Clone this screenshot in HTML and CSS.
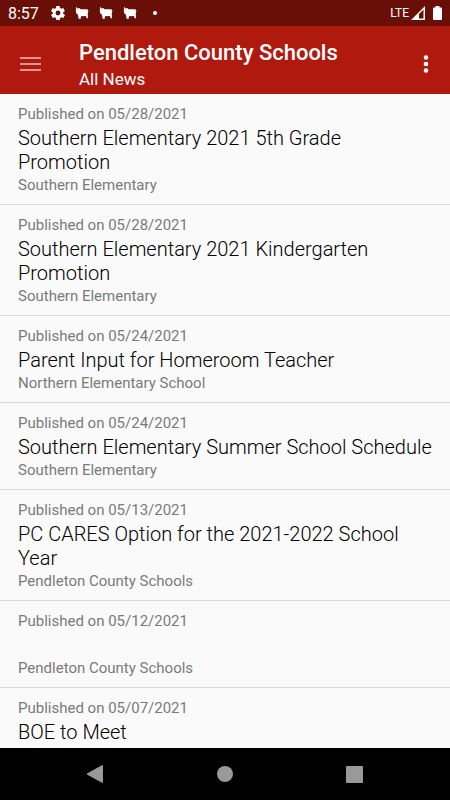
FILE: index.html
```html
<!DOCTYPE html>
<html lang="en">
<head>
    <meta charset="utf-8">
    <meta name="viewport" content="width=device-width, initial-scale=1">
    <title>Pendleton County Schools</title>
    <link rel="stylesheet" href="styles.css">
</head>
<body>
    <div class="status-bar">
        <span class="clock">8:57</span>
        <div class="notifications">
            <svg width="14" height="14" viewBox="2 2 20 20" fill="#fff"><path d="M19.4 13a7.500 7.500 0 0 0 0-2l2.100-1.650a.5.5 0 0 0 .1-.64l-2-3.460a.5.5 0 0 0-.6-.22l-2.500 1a7.300 7.300 0 0 0-1.700-1l-.38-2.650A.5.5 0 0 0 14 2h-4a.5.5 0 0 0-.5.420L9.100 5.070a7.300 7.300 0 0 0-1.700 1l-2.500-1a.5.5 0 0 0-.6.22l-2 3.460a.5.5 0 0 0 .1.640L4.600 11a7.500 7.500 0 0 0 0 2l-2.100 1.650a.5.5 0 0 0-.1.640l2 3.460c.12.220.4.300.6.220l2.500-1a7.300 7.300 0 0 0 1.700 1l.38 2.650c.04.240.25.420.5.420h4c.25 0 .46-.18.5-.42l.38-2.650a7.300 7.300 0 0 0 1.700-1l2.500 1c.22.080.48 0 .6-.22l2-3.460a.5.5 0 0 0-.1-.64zM12 15.500a3.500 3.500 0 1 1 0-7 3.500 3.500 0 0 1 0 7z"/></svg>
            <svg width="14" height="14" viewBox="0 0 14 14" fill="#fff"><path d="M1.200.8l1.400 1.700L4.300 2l1.200 1.300h6.300c1.200 0 1.600.8 1.500 2l-.6 2.200.3 4.700h-1.500l-.5-2.200L6 10.200 5.500 13H3.800L2.800 8.500 1.200 7.200.8 4.500z"/></svg>
            <svg width="14" height="14" viewBox="0 0 14 14" fill="#fff"><path d="M1.200.8l1.400 1.700L4.300 2l1.200 1.300h6.300c1.200 0 1.600.8 1.500 2l-.6 2.200.3 4.700h-1.500l-.5-2.200L6 10.200 5.500 13H3.800L2.800 8.500 1.200 7.200.8 4.500z"/></svg>
            <svg width="14" height="14" viewBox="0 0 14 14" fill="#fff"><path d="M1.200.8l1.400 1.700L4.300 2l1.200 1.300h6.300c1.200 0 1.600.8 1.500 2l-.6 2.200.3 4.700h-1.500l-.5-2.200L6 10.200 5.500 13H3.800L2.800 8.500 1.200 7.200.8 4.500z"/></svg>
            <span class="more-dot"></span>
        </div>
        <div class="system-icons">
            <span class="network">LTE</span>
            <svg width="14" height="14" viewBox="0 0 14 14"><path fill="#fff" fill-rule="evenodd" d="M14 0v14H0zM12.500 3.600L8 8.100v4.400h4.500z"/></svg>
            <svg class="battery" width="9" height="14" viewBox="0 0 9 14" fill="#fff"><path d="M2.500 0h4v1.400H8a1 1 0 0 1 1 1V13a1 1 0 0 1-1 1H1a1 1 0 0 1-1-1V2.400a1 1 0 0 1 1-1h1.500z"/></svg>
        </div>
    </div>

    <header class="app-bar">
        <button class="icon-button" aria-label="Menu">
            <svg width="21" height="16" viewBox="0 0 21 16" fill="#df9690"><path d="M0 1h21v2H0zM0 7h21v2H0zM0 13h21v2H0z"/></svg>
        </button>
        <div class="titles">
            <h1>Pendleton County Schools</h1>
            <p>All News</p>
        </div>
        <button class="icon-button overflow" aria-label="More options">
            <svg width="6" height="18" viewBox="0 0 6 18" fill="#fff"><circle cx="3" cy="2.500" r="2.300"/><circle cx="3" cy="9" r="2.300"/><circle cx="3" cy="15.500" r="2.300"/></svg>
        </button>
    </header>

    <main class="news-list">
        <article class="news-item">
            <p class="published">Published on 05/28/2021</p>
            <h2>Southern Elementary 2021 5th Grade Promotion</h2>
            <p class="source">Southern Elementary</p>
        </article>
        <article class="news-item">
            <p class="published">Published on 05/28/2021</p>
            <h2>Southern Elementary 2021 Kindergarten Promotion</h2>
            <p class="source">Southern Elementary</p>
        </article>
        <article class="news-item">
            <p class="published">Published on 05/24/2021</p>
            <h2>Parent Input for Homeroom Teacher</h2>
            <p class="source">Northern Elementary School</p>
        </article>
        <article class="news-item">
            <p class="published">Published on 05/24/2021</p>
            <h2>Southern Elementary Summer School Schedule</h2>
            <p class="source">Southern Elementary</p>
        </article>
        <article class="news-item">
            <p class="published">Published on 05/13/2021</p>
            <h2>PC CARES Option for the 2021-2022 School Year</h2>
            <p class="source">Pendleton County Schools</p>
        </article>
        <article class="news-item">
            <p class="published">Published on 05/12/2021</p>
            <h2></h2>
            <p class="source">Pendleton County Schools</p>
        </article>
        <article class="news-item">
            <p class="published">Published on 05/07/2021</p>
            <h2>BOE to Meet</h2>
        </article>
    </main>

    <nav class="nav-bar">
        <button class="icon-button" aria-label="Back">
            <svg width="20" height="20" viewBox="0 0 20 20"><path fill="#999" d="M16 1.200a.8.8 0 0 1 1 .8v16a.8.8 0 0 1-1 .8L1.400 10.700a.8.8 0 0 1 0-1.400z"/></svg>
        </button>
        <button class="icon-button" aria-label="Home">
            <svg width="16" height="16" viewBox="0 0 16 16"><circle cx="8" cy="8" r="8" fill="#999"/></svg>
        </button>
        <button class="icon-button" aria-label="Recent apps">
            <svg width="17" height="17" viewBox="0 0 17 17"><rect width="17" height="17" rx="1" fill="#999"/></svg>
        </button>
    </nav>
</body>
</html>
```
FILE: styles.css
```css
* {
    box-sizing: border-box;
}

body {
    display: flex;
    flex-direction: column;
    height: 100vh;
    margin: 0;
    background: #fafafa;
    font-family: Roboto, "Liberation Sans", sans-serif;
}

h1, h2, p {
    margin: 0;
    font-weight: 400;
}

svg {
    display: block;
}

.status-bar {
    display: flex;
    flex: none;
    align-items: center;
    height: 26px;
    padding: 0 8px;
    background: #690f08;
    color: #fff;
}

.clock {
    font-size: 16px;
}

.notifications {
    display: flex;
    align-items: center;
    gap: 10px;
    margin-left: 12px;
}

.more-dot {
    width: 4px;
    height: 4px;
    margin-left: 6px;
    border-radius: 50%;
    background: #fff;
}

.system-icons {
    display: flex;
    align-items: center;
    margin-left: auto;
}

.network {
    margin-right: 2px;
    font-size: 12px;
}

.battery {
    margin-left: 8px;
}

.app-bar {
    display: flex;
    flex: none;
    align-items: center;
    height: 68px;
    padding: 7px 12px 0 8px;
    background: #b0190e;
    color: #fff;
}

.icon-button {
    display: flex;
    align-items: center;
    justify-content: center;
    width: 45px;
    height: 45px;
    padding: 0;
    border: none;
    background: none;
    cursor: pointer;
}

.titles {
    flex: 1;
    margin-left: 26px;
    padding-top: 2px;
}

.titles h1 {
    font-size: 22px;
    font-weight: 500;
    line-height: 28px;
}

.titles p {
    font-size: 17px;
    line-height: 24px;
}

.overflow {
    width: 24px;
}

.news-list {
    flex: 1;
    min-height: 0;
    overflow: hidden;
}

.news-item {
    padding: 10px 18px 9px;
    border-bottom: 1px solid #dadada;
}

.news-item h2 {
    min-height: 24px;
    margin: 2px 0 1px;
    color: #000;
    font-size: 20px;
    font-weight: 300;
    line-height: 24px;
}

.published, .source {
    color: #7a7a7a;
    font-size: 15px;
    line-height: 20px;
}

.nav-bar {
    display: flex;
    flex: none;
    align-items: center;
    justify-content: center;
    gap: 84px;
    height: 52px;
    background: #000;
}
```
